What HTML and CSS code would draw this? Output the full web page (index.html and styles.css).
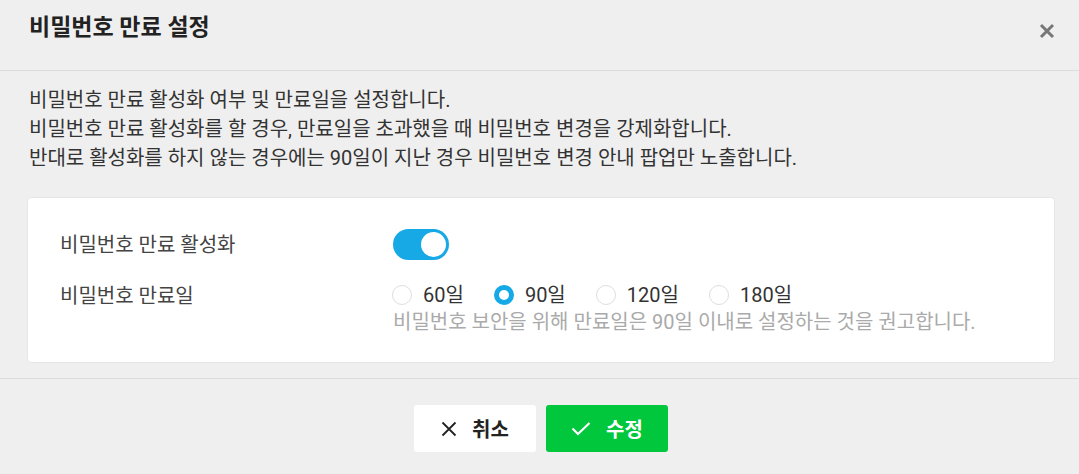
FILE: index.html
```html
<!DOCTYPE html>
<html lang="ko">
<head>
<meta charset="utf-8">
<link rel="stylesheet" href="styles.css">
</head>
<body>
<div class="modal">
  <div class="modal-header">
    <h1 class="modal-title">비밀번호 만료 설정</h1>
    <button class="close-btn" aria-label="닫기">
      <svg width="16" height="16" viewBox="0 0 16 16"><path d="M2 2L14 14M14 2L2 14" stroke="#777" stroke-width="3"/></svg>
    </button>
  </div>
  <div class="modal-body">
    <p class="desc">비밀번호 만료 활성화 여부 및 만료일을 설정합니다.<br>비밀번호 만료 활성화를 할 경우, 만료일을 초과했을 때 비밀번호 변경을 강제화합니다.<br>반대로 활성화를 하지 않는 경우에는 90일이 지난 경우 비밀번호 변경 안내 팝업만 노출합니다.</p>
    <div class="card">
      <div class="row">
        <div class="label">비밀번호 만료 활성화</div>
        <div class="value"><span class="toggle on"><span class="knob"></span></span></div>
      </div>
      <div class="row row-period">
        <div class="label">비밀번호 만료일</div>
        <div class="value">
          <div class="radios">
            <label class="radio"><span class="dot"></span>60일</label>
            <label class="radio checked"><span class="dot"></span>90일</label>
            <label class="radio"><span class="dot"></span>120일</label>
            <label class="radio"><span class="dot"></span>180일</label>
          </div>
          <div class="hint">비밀번호 보안을 위해 만료일은 90일 이내로 설정하는 것을 권고합니다.</div>
        </div>
      </div>
    </div>
  </div>
  <div class="modal-footer">
    <button class="btn btn-cancel">
      <svg width="16" height="16" viewBox="0 0 16 16"><path d="M1.5 1.5L14.5 14.5M14.5 1.5L1.5 14.5" stroke="#222" stroke-width="1.8"/></svg>
      취소
    </button>
    <button class="btn btn-ok">
      <svg width="20" height="14" viewBox="0 0 20 14"><path d="M1.5 6.5L7 12L18.5 1" fill="none" stroke="#fff" stroke-width="2.2"/></svg>
      수정
    </button>
  </div>
</div>
</body>
</html>
```

FILE: styles.css
```css
* { box-sizing: border-box; }
html, body { margin: 0; padding: 0; }
body {
  background: #efefef;
  font-family: Roboto, "Noto Sans CJK KR", sans-serif;
  color: #333;
}
.modal {
  width: 1079px;
  height: 474px;
  background: #efefef;
  display: flex;
  flex-direction: column;
}
.modal-header {
  height: 71px;
  flex: none;
  border-bottom: 1px solid #dcdcdc;
  display: flex;
  align-items: flex-start;
  justify-content: space-between;
  padding: 14px 24px 0 29px;
}
.modal-title {
  margin: 0;
  font-size: 23px;
  font-weight: 700;
  color: #222;
  line-height: 28px;
}
.close-btn {
  border: 0;
  background: none;
  padding: 0;
  margin-top: 9px;
  width: 16px;
  height: 16px;
  display: flex;
}
.modal-body {
  flex: none;
  padding: 15px 24px 15px 27px;
  border-bottom: 1px solid #dcdcdc;
}
.desc {
  margin: 0 0 24px 2px;
  font-size: 20px;
  line-height: 29px;
  color: #333;
  white-space: nowrap;
}
.card {
  background: #fff;
  border-radius: 4px;
  border: 1px solid #e6e6e6;
  padding: 31px 32px 27px;
}
.row {
  display: flex;
  align-items: center;
}
.row-period {
  align-items: flex-start;
  margin-top: 21px;
}
.label {
  width: 333px;
  font-size: 20px;
  color: #444;
  line-height: 28px;
}
.row-period .label { line-height: 30px; }
.toggle {
  display: block;
  width: 56px;
  height: 31px;
  border-radius: 16px;
  background: #16a9e6;
  position: relative;
}
.knob {
  position: absolute;
  top: 3px;
  right: 3px;
  width: 25px;
  height: 25px;
  border-radius: 50%;
  background: #fff;
}
.radios {
  display: flex;
  height: 28px;
  align-items: center;
  margin-left: -1px;
}
.radio {
  display: flex;
  align-items: center;
  font-size: 20px;
  color: #333;
  margin-right: 30px;
  line-height: 28px;
}
.dot {
  width: 20px;
  height: 20px;
  border-radius: 50%;
  border: 1px solid #dedede;
  background: #fff;
  margin-right: 11px;
}
.radio.checked .dot {
  border: 5.5px solid #16a9e6;
}
.hint {
  font-size: 20px;
  color: #aaa;
  line-height: 26px;
  white-space: nowrap;
}
.modal-footer {
  flex: 1;
  display: flex;
  justify-content: center;
  gap: 10px;
  padding: 26px 0 0 3px;
}
.btn {
  width: 122px;
  height: 47px;
  border: 0;
  border-radius: 3px;
  font-family: Roboto, "Noto Sans CJK KR", sans-serif;
  font-size: 20px;
  font-weight: 700;
  display: flex;
  align-items: center;
  justify-content: center;
  gap: 15px;
}
.btn-cancel { background: #fff; color: #222; }
.btn-ok { background: #00c73c; color: #fff; }
```
